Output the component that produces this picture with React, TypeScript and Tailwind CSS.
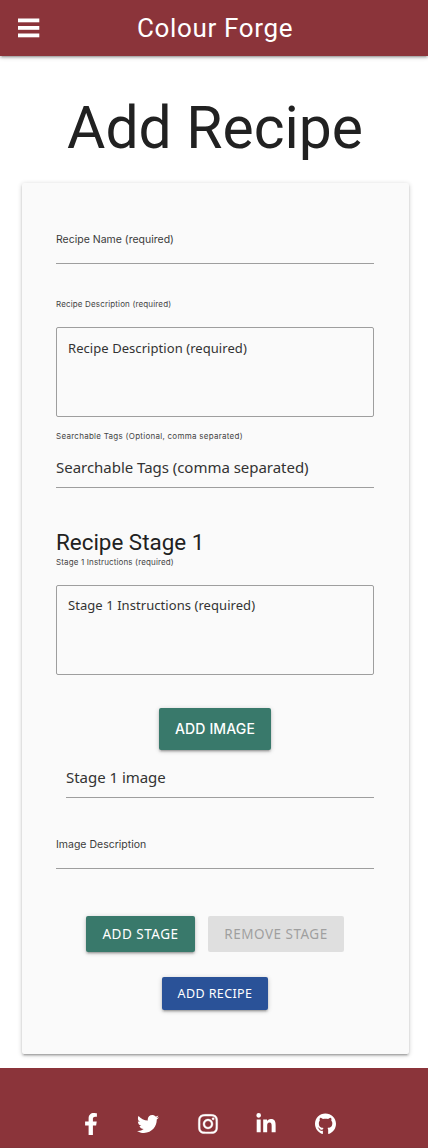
import React from "react";
import { FaFacebookF, FaTwitter, FaInstagram, FaLinkedinIn, FaGithub } from "react-icons/fa";

const lift = "shadow-[0_2px_2px_0_rgba(0,0,0,0.14),0_3px_1px_-2px_rgba(0,0,0,0.12),0_1px_5px_0_rgba(0,0,0,0.2)]";
const smallLabel = "block whitespace-nowrap font-['Inter'] text-[8px] leading-3 text-[#444]";
const mediumLabel = "block whitespace-nowrap font-['Inter'] text-[10.5px] leading-4 text-[#3a3a3a]";
const lineInput =
  "block w-full border-b border-[#9e9e9e] bg-transparent font-['Noto_Sans'] text-[15px] tracking-[-0.03px] text-[#333] outline-none placeholder:text-[#333] placeholder:opacity-100";
const area =
  "block h-[90px] w-full resize-none rounded-[2px] border border-[#9e9e9e] bg-transparent px-[11px] font-['Noto_Sans'] text-[13px] leading-5 tracking-[0.06px] text-[#333] outline-none placeholder:text-[#333] placeholder:opacity-100";

export default function App() {
  return (
    <div className="flex h-[1148px] w-[428px] flex-col bg-white font-['Roboto'] text-[#212121]">
      <header className={`flex h-14 shrink-0 items-center bg-[#8b343a] text-white ${lift}`}>
        <button aria-label="Menu" className="ml-[18px] flex w-[22px]">
          <svg viewBox="0 0 22 20" className="h-5 w-[22px]" fill="currentColor">
            <rect x="0" y="0.5" width="21.3" height="3.8" />
            <rect x="0" y="8" width="21.3" height="3.8" />
            <rect x="0" y="15.5" width="21.3" height="3.8" />
          </svg>
        </button>
        <span className="ml-[97px] whitespace-nowrap text-[26px] leading-8 tracking-[0.65px]">Colour Forge</span>
      </header>

      <h1 className="mt-[39px] h-[65px] whitespace-nowrap pl-0.5 text-center text-[58.8px] leading-[65px]">Add Recipe</h1>

      <form className={`mt-[23px] ml-[22px] flex h-[871px] w-[387px] shrink-0 flex-col rounded-[2px] bg-[#fafafa] pt-12 pr-[35px] pl-[34px] ${lift}`}>
        <label htmlFor="name" className={`${mediumLabel} mt-px`}>Recipe Name (required)</label>
        <input id="name" className={`${lineInput} h-4`} />

        <label htmlFor="description" className={`${smallLabel} mt-[34px] tracking-[0.15px]`}>Recipe Description (required)</label>
        <textarea id="description" placeholder="Recipe Description (required)" className={`${area} mt-[17px] pt-[10px]`} />

        <label htmlFor="tags" className={`${smallLabel} mt-[13px] tracking-[0.27px]`}>Searchable Tags (Optional, comma separated)</label>
        <input id="tags" placeholder="Searchable Tags (comma separated)" className={`${lineInput} mt-[5px] h-[41px]`} />

        <h5 className="mt-[41px] h-[27px] whitespace-nowrap text-[22.4px] leading-[27px]">Recipe Stage 1</h5>
        <label htmlFor="stage" className={`${smallLabel} tracking-[0.14px]`}>Stage 1 Instructions (required)</label>
        <textarea id="stage" placeholder="Stage 1 Instructions (required)" className={`${area} mt-[17px] pt-[9px]`} />

        <button type="button" className={`mt-[33px] ml-[103px] h-[42px] w-28 shrink-0 whitespace-nowrap rounded-[2px] bg-[#39796b] pb-px font-['Inter'] text-[14px] font-medium tracking-[0.15px] text-white ${lift}`}>ADD IMAGE</button>
        <div className="mt-[7px] pl-[10px]">
          <input aria-label="Stage image" placeholder="Stage 1 image" className={`${lineInput} h-[41px]`} />
        </div>

        <label htmlFor="image" className={`${mediumLabel} mt-[39px]`}>Image Description</label>
        <input id="image" className={`${lineInput} h-4`} />

        <div className="mt-[47px] ml-[30px] flex gap-[13px]">
          <button type="button" className={`h-9 w-[109px] whitespace-nowrap rounded-[2px] bg-[#39796b] font-['Noto_Sans'] text-[13.5px] tracking-[0.5px] text-white ${lift}`}>ADD STAGE</button>
          <button type="button" disabled className="h-9 w-[136px] whitespace-nowrap rounded-[2px] bg-[#dfdfdf] font-['Noto_Sans'] text-[13.5px] tracking-[0.5px] text-[#9f9f9f]">REMOVE STAGE</button>
        </div>
        <button type="button" className={`mt-[25px] ml-[106px] h-[33px] w-[106px] shrink-0 whitespace-nowrap rounded-[2px] bg-[#2a5298] pt-px font-['Noto_Sans'] text-[12.5px] tracking-[0.4px] text-white ${lift}`}>ADD RECIPE</button>
      </form>

      <footer className="mt-[14px] flex h-20 shrink-0 items-start border-b border-[#84343a] bg-[#8b343a] pt-[45px] pl-[84px] text-white">
        <FaFacebookF className="h-[22px] w-[14px]" />
        <FaTwitter className="ml-[39px] h-[22px] w-[22px]" />
        <FaInstagram className="ml-[38px] h-[22px] w-[22px] stroke-current stroke-[10]" />
        <FaLinkedinIn className="ml-[37px] h-[22px] w-5" />
        <FaGithub className="ml-[39px] h-[22px] w-[21px]" />
      </footer>
    </div>
  );
}
